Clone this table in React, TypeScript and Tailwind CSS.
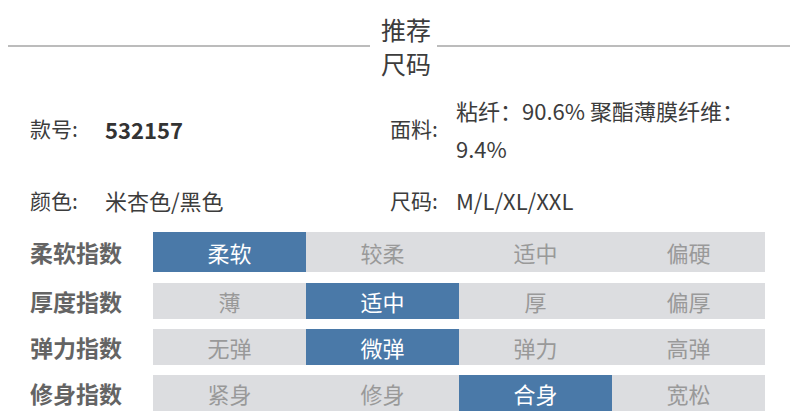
const rows: { label: string; opts: string[]; active: number; tall?: boolean }[] = [
  { label: '柔软指数', opts: ['柔软', '较柔', '适中', '偏硬'], active: 0, tall: true },
  { label: '厚度指数', opts: ['薄', '适中', '厚', '偏厚'], active: 1 },
  { label: '弹力指数', opts: ['无弹', '微弹', '弹力', '高弹'], active: 1 },
  { label: '修身指数', opts: ['紧身', '修身', '合身', '宽松'], active: 2 },
];

export default function App() {
  return (
    <div
      className="h-[411px] w-[790px] overflow-hidden bg-white text-[#3c3c3c]"
      style={{ fontFamily: '"Noto Sans CJK SC", "Noto Sans", sans-serif' }}
    >
      {/* heading */}
      <div className="flex items-center pt-[12px] pl-[8px]">
        <div className="h-[2px] w-[362px] bg-[#bcbcbc]" />
        <div className="ml-[11px] mr-[6px] text-center text-[25px] leading-[34px] text-[#3c3c3c]">
          推荐
          <br />
          尺码
        </div>
        <div className="h-[2px] flex-1 bg-[#bcbcbc]" />
      </div>

      {/* info */}
      <div className="mt-[11px] grid grid-cols-[360px_1fr] pl-[30px]">
        <div className="flex items-center">
          <span className="w-[75px] shrink-0 text-[21px]">款号:</span>
          <span className="text-[22px] font-bold text-[#333]">532157</span>
        </div>
        <div className="flex items-center">
          <span className="w-[66px] shrink-0 text-[21px]">面料:</span>
          <span className="w-[320px] text-[22px] leading-[38px]">粘纤：90.6% 聚酯薄膜纤维：9.4%</span>
        </div>
        <div className="mt-[14px] flex items-center leading-[38px]">
          <span className="w-[75px] shrink-0 text-[21px]">颜色:</span>
          <span className="text-[22px]">米杏色/黑色</span>
        </div>
        <div className="mt-[14px] flex items-center leading-[38px]">
          <span className="w-[66px] shrink-0 text-[21px]">尺码:</span>
          <span className="text-[22px]">M/L/XL/XXL</span>
        </div>
      </div>

      {/* indexes */}
      <div className="mt-[13px] flex flex-col gap-[10px] pl-[30px]">
        {rows.map((r, ri) => (
          <div key={r.label} className={`flex items-center ${ri === 1 ? 'mt-[1px]' : ''}`}>
            <div className="w-[123px] text-[23px] font-bold text-[#646464]">{r.label}</div>
            <div className={`grid w-[612px] grid-cols-4 ${r.tall ? 'h-[40px]' : 'h-[36px]'}`}>
              {r.opts.map((o, i) => (
                <div
                  key={o}
                  className={`flex items-center justify-center text-[22px] ${
                    i === r.active ? 'bg-[#4a79a8] text-white' : 'bg-[#dcdde0] text-[#999]'
                  }`}
                >
                  {o}
                </div>
              ))}
            </div>
          </div>
        ))}
      </div>
    </div>
  );
}
